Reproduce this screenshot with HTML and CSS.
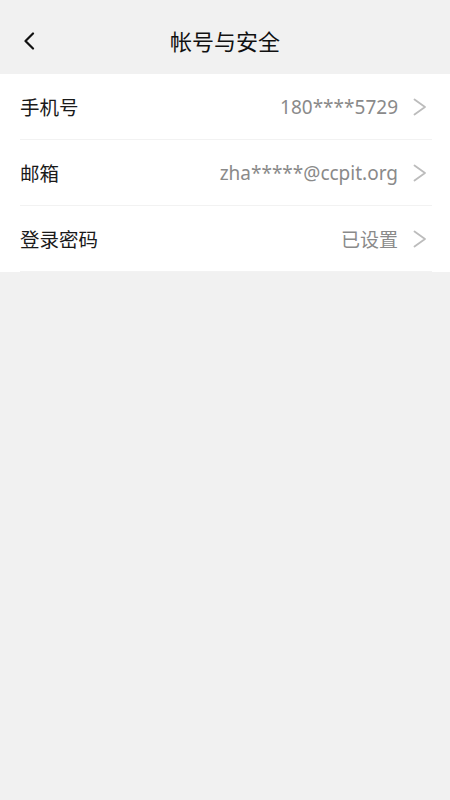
FILE: index.html
```html
<!DOCTYPE html>
<html lang="zh">
<head>
<meta charset="utf-8">
<link rel="stylesheet" href="styles.css">
</head>
<body>
<div class="page">
  <header class="topbar">
    <button class="back" aria-label="返回">
      <svg width="14" height="18" viewBox="0 0 14 18"><path d="M11 1.5 L3.5 9 L11 16.5" fill="none" stroke="#111" stroke-width="2.2" stroke-linecap="round" stroke-linejoin="round"/></svg>
    </button>
    <h1 class="title">帐号与安全</h1>
  </header>
  <ul class="list">
    <li class="row">
      <span class="label">手机号</span>
      <span class="value">180****5729</span>
      <svg class="arrow" width="16" height="18" viewBox="0 0 16 18"><path d="M2.5 1.5 L13 9 L2.5 16.5" fill="none" stroke="#bcbcbc" stroke-width="1.8" stroke-linecap="round" stroke-linejoin="round"/></svg>
    </li>
    <li class="row">
      <span class="label">邮箱</span>
      <span class="value">zha*****@ccpit.org</span>
      <svg class="arrow" width="16" height="18" viewBox="0 0 16 18"><path d="M2.5 1.5 L13 9 L2.5 16.5" fill="none" stroke="#bcbcbc" stroke-width="1.8" stroke-linecap="round" stroke-linejoin="round"/></svg>
    </li>
    <li class="row">
      <span class="label">登录密码</span>
      <span class="value">已设置</span>
      <svg class="arrow" width="16" height="18" viewBox="0 0 16 18"><path d="M2.5 1.5 L13 9 L2.5 16.5" fill="none" stroke="#bcbcbc" stroke-width="1.8" stroke-linecap="round" stroke-linejoin="round"/></svg>
    </li>
  </ul>
</div>
</body>
</html>
```
FILE: styles.css
```css
* { box-sizing: border-box; }
html, body {
  margin: 0;
  padding: 0;
  background: #f1f1f1;
  font-family: "Noto Sans", "Noto Sans CJK SC", sans-serif;
}
.page {
  width: 450px;
  min-height: 800px;
  background: #f1f1f1;
}
.topbar {
  position: relative;
  height: 74px;
  display: flex;
  align-items: center;
  justify-content: center;
}
.back {
  position: absolute;
  left: 22px;
  top: 32px;
  padding: 0;
  border: 0;
  background: none;
  display: flex;
}
.title {
  margin: 0;
  margin-top: 5px;
  font-size: 22px;
  font-weight: 400;
  color: #111;
  font-family: "Noto Sans CJK SC", sans-serif;
}
.list {
  list-style: none;
  margin: 0;
  padding: 0;
  background: #fff;
}
.row {
  height: 66px;
  margin: 0 18px 0 20px;
  display: flex;
  align-items: center;
  border-bottom: 1px solid #f2f2f2;
}
.label {
  flex: 1;
  font-size: 19.5px;
  color: #1a1a1a;
  font-family: "Noto Sans CJK SC", sans-serif;
}
.value {
  font-size: 19px;
  color: #8a8a8a;
  font-family: "Noto Sans", "Noto Sans CJK SC", sans-serif;
}
.arrow {
  margin-left: 14px;
  margin-right: 4px;
}
```
